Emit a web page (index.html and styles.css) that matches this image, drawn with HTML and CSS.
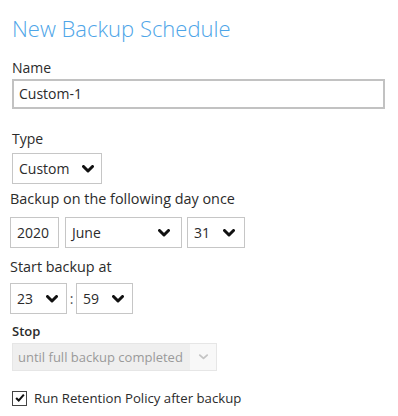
FILE: index.html
```html
<!DOCTYPE html>
<html lang="en">
<head>
    <meta charset="UTF-8">
    <title>New Backup Schedule</title>
    <link rel="stylesheet" href="styles.css">
</head>
<body>
    <div class="schedule">
        <h1 class="title">New Backup Schedule</h1>

        <div class="label name-label">Name</div>
        <div class="text-input">Custom-1</div>

        <div class="label type-label">Type</div>
        <div class="select type-select">
            <span class="value">Custom</span>
            <svg class="chevron" viewBox="0 0 12 8"><polyline points="1.5,1.5 6,6 10.5,1.5"/></svg>
        </div>

        <div class="shifted">
            <div class="label day-label">Backup on the following day once</div>
            <div class="row">
                <div class="select year">2020</div>
                <div class="select month">
                    <span class="value">June</span>
                    <svg class="chevron" viewBox="0 0 12 8"><polyline points="1.5,1.5 6,6 10.5,1.5"/></svg>
                </div>
                <div class="select day">
                    <span class="value">31</span>
                    <svg class="chevron" viewBox="0 0 12 8"><polyline points="1.5,1.5 6,6 10.5,1.5"/></svg>
                </div>
            </div>

            <div class="label start-label">Start backup at</div>
            <div class="row time-row">
                <div class="select time">
                    <span class="value">23</span>
                    <svg class="chevron" viewBox="0 0 12 8"><polyline points="1.5,1.5 6,6 10.5,1.5"/></svg>
                </div>
                <span class="colon">:</span>
                <div class="select time">
                    <span class="value">59</span>
                    <svg class="chevron" viewBox="0 0 12 8"><polyline points="1.5,1.5 6,6 10.5,1.5"/></svg>
                </div>
            </div>
        </div>

        <div class="label stop-label">Stop</div>
        <div class="select disabled">
            <span class="value">until full backup completed</span>
            <span class="arrow-box">
                <svg class="chevron light" viewBox="0 0 12 8"><polyline points="2,2 6,5.5 10,2"/></svg>
            </span>
        </div>

        <label class="check">
            <span class="box">
                <svg viewBox="0 0 14 14"><polyline points="2.5,7 5.5,10 11.5,3"/></svg>
            </span>
            Run Retention Policy after backup
        </label>
    </div>
</body>
</html>
```

FILE: styles.css
```css
* {
    margin: 0;
    padding: 0;
    box-sizing: border-box;
}

body {
    font-family: "Open Sans", "Liberation Sans", sans-serif;
    background: #ffffff;
    color: #2b2b2b;
}

.schedule {
    padding: 14px 12px 0;
    display: flex;
    flex-direction: column;
    align-items: flex-start;
}

.title {
    font-size: 22px;
    line-height: 28px;
    font-weight: 300;
    color: #4ea5e8;
}

.label {
    font-size: 14px;
    line-height: 20px;
    color: #2b2b2b;
}

.name-label {
    margin-top: 16px;
}

.text-input {
    margin-top: 1px;
    width: 373px;
    height: 30px;
    border: 2px solid #c2c2c2;
    padding-left: 5px;
    font-size: 14px;
    line-height: 26px;
}

.type-label {
    margin-top: 20px;
}

.select {
    display: flex;
    align-items: center;
    justify-content: space-between;
    height: 31px;
    border: 1.5px solid #c6c6c6;
    padding: 0 7px 0 6px;
    font-size: 14px;
    line-height: 20px;
    background: #ffffff;
}

.type-select {
    margin-top: 4px;
    width: 90px;
}

.chevron {
    width: 12px;
    height: 8px;
    fill: none;
    stroke: #111111;
    stroke-width: 3;
    stroke-linecap: round;
    stroke-linejoin: round;
}

.shifted {
    margin-left: -2px;
    display: flex;
    flex-direction: column;
    align-items: flex-start;
}

.day-label {
    margin-top: 5px;
    font-size: 14.4px;
}

.row {
    display: flex;
    align-items: center;
    margin-top: 8px;
}

.year {
    width: 49px;
}

.month {
    width: 117px;
    margin-left: 6px;
    padding-right: 11px;
}

.day {
    width: 58px;
    margin-left: 5px;
    padding-right: 9px;
}

.start-label {
    margin-top: 9px;
    font-size: 14.4px;
}

.time-row {
    margin-top: 6px;
}

.time {
    width: 57px;
    padding-right: 8px;
}

.colon {
    width: 9px;
    text-align: center;
    font-size: 14px;
    color: #555555;
}

.stop-label {
    margin-top: 8px;
    font-size: 13px;
    line-height: 18px;
    font-weight: 600;
}

.disabled {
    margin-top: 3px;
    width: 205px;
    height: 28px;
    padding: 0 0 0 5px;
    border: 1px solid #e6e6e6;
    background: #efefef;
    color: #9a9a9a;
    font-size: 13px;
}

.arrow-box {
    align-self: stretch;
    width: 26px;
    display: flex;
    align-items: center;
    justify-content: center;
    background: #f8f8f8;
}

.chevron.light {
    width: 11px;
    stroke: #c4c4c4;
    stroke-width: 2;
}

.check {
    margin-top: 17px;
    display: flex;
    align-items: center;
    gap: 7px;
    font-size: 13.2px;
    line-height: 20px;
    color: #2b2b2b;
}

.box {
    width: 15px;
    height: 15px;
    border: 1.5px solid #444444;
    display: flex;
    align-items: center;
    justify-content: center;
}

.box svg {
    width: 12px;
    height: 12px;
    fill: none;
    stroke: #111111;
    stroke-width: 2.4;
}
```
